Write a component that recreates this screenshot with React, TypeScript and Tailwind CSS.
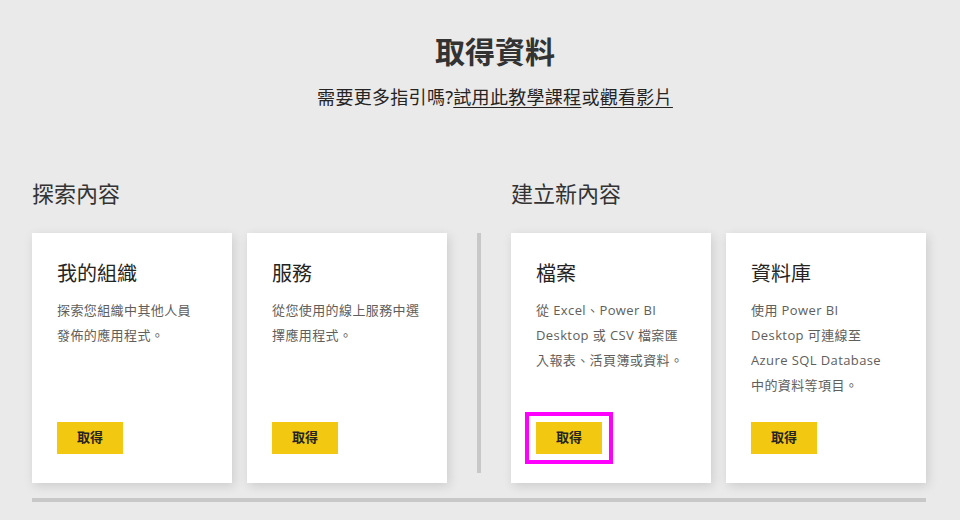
import React from "react";

interface CardProps {
  title: string;
  lines: string[];
  highlight?: boolean;
}

function SourceCard({ title, lines, highlight }: CardProps) {
  return (
    <div className="flex h-[250px] w-[200px] flex-col bg-white px-[25px] pt-[27px] pb-[29px] shadow-[2px_3px_10px_rgba(0,0,0,0.13)]">
      <h3 className="text-[20px] leading-[28px] text-[#252423]">{title}</h3>
      <p
        className="mt-[10px] text-[13px] leading-[25px] tracking-[0.4px] text-[#605e5c]"
        style={{ fontFamily: '"Open Sans", "Noto Sans CJK TC", sans-serif' }}
      >
        {lines.map((l) => (
          <span key={l} className="block whitespace-nowrap">
            {l}
          </span>
        ))}
      </p>
      <div className="mt-auto">
        <div className="relative inline-block">
          <button className="h-[32px] w-[66px] bg-[#f2c811] text-[13px] font-bold text-[#252423]">
            取得
          </button>
          {highlight && (
            <div className="pointer-events-none absolute -top-[10px] -bottom-[10px] -left-[11px] -right-[11px] border-4 border-[#ff00ff]" />
          )}
        </div>
      </div>
    </div>
  );
}

export default function App() {
  return (
    <div
      className="h-[520px] w-[960px] overflow-hidden bg-[#eaeaea] text-[#333]"
      style={{ fontFamily: '"Noto Sans", "Noto Sans CJK TC", sans-serif' }}
    >
      {/* Header */}
      <div className="pl-[30px] pt-[32px] text-center">
        <h1 className="text-[30px] font-bold leading-[40px] text-[#333]">取得資料</h1>
        <p className="mt-[12px] text-[18px] leading-[26px] tracking-[0.3px] text-[#252423]">
          需要更多指引嗎?
          <a className="underline underline-offset-[3px]">試用此教學課程</a>或
          <a className="underline underline-offset-[3px]">觀看影片</a>
        </p>
      </div>

      {/* Sections */}
      <div className="mt-[68px] flex pl-[32px] pr-[34px]">
        <section className="w-[415px]">
          <h2 className="text-[22px] leading-[30px] text-[#333]">探索內容</h2>
          <div className="mt-[25px] flex gap-[15px]">
            <SourceCard title="我的組織" lines={["探索您組織中其他人員", "發佈的應用程式。"]} />
            <SourceCard title="服務" lines={["從您使用的線上服務中選", "擇應用程式。"]} />
          </div>
        </section>

        <div className="mx-[30px] mt-[55px] h-[240px] w-[4px] bg-[#c8c8c8]" />

        <section className="w-[415px]">
          <h2 className="text-[22px] leading-[30px] text-[#333]">建立新內容</h2>
          <div className="mt-[25px] flex gap-[15px]">
            <SourceCard
              title="檔案"
              lines={["從 Excel、Power BI", "Desktop 或 CSV 檔案匯", "入報表、活頁簿或資料。"]}
              highlight
            />
            <SourceCard
              title="資料庫"
              lines={["使用 Power BI", "Desktop 可連線至", "Azure SQL Database", "中的資料等項目。"]}
            />
          </div>
        </section>
      </div>

      <div className="ml-[32px] mt-[15px] h-[4px] w-[894px] bg-[#c8c8c8]" />
    </div>
  );
}
